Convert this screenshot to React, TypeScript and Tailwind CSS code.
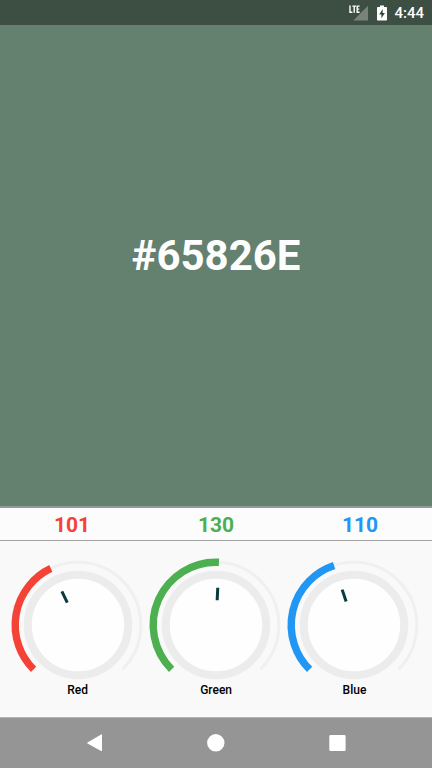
const CENTER = 70;

function point(radius: number, deg: number): [number, number] {
  const a = (deg * Math.PI) / 180;
  return [CENTER + radius * Math.sin(a), CENTER - radius * Math.cos(a)];
}

function arc(radius: number, from: number, to: number) {
  const [x1, y1] = point(radius, from);
  const [x2, y2] = point(radius, to);
  return `M${x1} ${y1}A${radius} ${radius} 0 ${to - from > 180 ? 1 : 0} 1 ${x2} ${y2}`;
}

function Dial({ label, color, angle }: { label: string; color: string; angle: number }) {
  const [x1, y1] = point(37.3, angle);
  const [x2, y2] = point(24.8, angle);
  return (
    <div className="flex w-[138.4px] flex-col items-center">
      <svg width="140" height="140" viewBox="0 0 140 140" fill="none" className="shrink-0">
        <path d={arc(62.8, -135, 135)} stroke="#f0f0f0" strokeWidth="3" />
        <circle cx="70" cy="70" r="50.2" fill="#fefefe" stroke="#ececec" strokeWidth="8" />
        <path d={arc(62.8, -135, angle)} stroke={color} strokeWidth="7.4" />
        <path d={`M${x1} ${y1}L${x2} ${y2}`} stroke="#0b3a3c" strokeWidth="3" />
      </svg>
      <span className="-mt-[13px] text-xs leading-4 font-medium text-black">{label}</span>
    </div>
  );
}

export default function App() {
  return (
    <div className="flex h-[768px] w-[432px] flex-col overflow-hidden bg-[#f9f9f9] font-['Roboto',sans-serif]">
      <header className="flex h-[25px] shrink-0 items-center justify-end bg-[#3d4e42] pr-2 text-white">
        <svg width="20" height="18" viewBox="0 0 20 18" className="mr-[9px]">
          <path d="M20 1.8V16.5H5.3Z" fill="#788279" />
          <path d="M2 1.5V8.2H4.4M4.4 2.1H8M6.2 2.1V8.8M11.6 2.1H9.2V8.2H11.6M9.2 5.1H11.2" fill="none" stroke="#fff" strokeWidth="1.4" />
        </svg>
        <svg width="10" height="16" viewBox="0 0 10 16" className="mr-[7px]">
          <path d="M3 0.5H7V2H9.2Q10 2 10 2.8V14.7Q10 15.5 9.2 15.5H0.8Q0 15.5 0 14.7V2.8Q0 2 0.8 2H3Z" fill="#fff" />
          <path d="M5.7 4L2.2 9.5H4.4V13.2L7.9 7.9H5.7Z" fill="#34443a" />
        </svg>
        <span className="pt-0.5 text-[15px] leading-[23px] font-medium">4:44</span>
      </header>

      <main className="flex h-[481px] shrink-0 items-center justify-center bg-[#64806e] pb-[19px]">
        <h1 className="text-[42px] leading-none font-bold text-[#fdfdfd]">#65826E</h1>
      </main>

      <section className="grid h-[35px] shrink-0 grid-cols-3 items-center border-t-2 border-b border-t-[#969a96] border-b-[#a4a4a4] bg-[#fcfcfc] pt-[3px] text-center text-[21px] leading-[29px] font-bold">
        <span className="text-[#f04438]">101</span>
        <span className="text-[#4caf50]">130</span>
        <span className="text-[#2196f3]">110</span>
      </section>

      <section className="flex h-[176px] shrink-0 justify-center pt-[14px] pl-[0.2px]">
        <Dial label="Red" color="#f44336" angle={-25.6} />
        <Dial label="Green" color="#4caf50" angle={2.7} />
        <Dial label="Blue" color="#2196f3" angle={-18.5} />
      </section>

      <nav className="flex h-[51px] shrink-0 items-center justify-center gap-[101px] border-t border-[#b4b4b4] bg-[#959595]">
        <svg width="20" height="20" viewBox="0 0 20 20">
          <path d="M17 1.8V17.5Q17 18.3 16.1 17.9L2.5 10.4Q1.8 9.9 2.5 9.4L16.1 1.4Q17 1 17 1.8Z" fill="#fff" />
        </svg>
        <svg width="20" height="20" viewBox="0 0 20 20">
          <circle cx="9.8" cy="9.8" r="8.7" fill="#fff" />
        </svg>
        <svg width="20" height="20" viewBox="0 0 20 20">
          <rect x="2.3" y="2" width="16.3" height="16" rx="1.2" fill="#fff" />
        </svg>
      </nav>
    </div>
  );
}
